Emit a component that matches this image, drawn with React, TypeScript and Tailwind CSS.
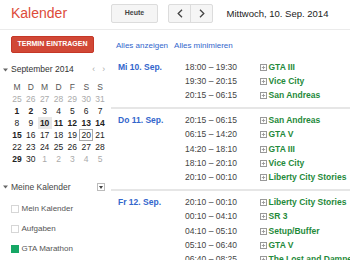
import React from "react";

type Entry = [string, string];

const agenda: { label: string; items: Entry[] }[] = [
  {
    label: "Mi 10. Sep.",
    items: [
      ["18:00 – 19:30", "GTA III"],
      ["19:30 – 20:15", "Vice City"],
      ["20:15 – 06:15", "San Andreas"],
    ],
  },
  {
    label: "Do 11. Sep.",
    items: [
      ["20:15 – 06:15", "San Andreas"],
      ["06:15 – 14:20", "GTA V"],
      ["14:20 – 18:10", "GTA III"],
      ["18:10 – 20:10", "Vice City"],
      ["20:10 – 00:10", "Liberty City Stories"],
    ],
  },
  {
    label: "Fr 12. Sep.",
    items: [
      ["20:10 – 00:10", "Liberty City Stories"],
      ["00:10 – 04:10", "SR 3"],
      ["04:10 – 05:10", "Setup/Buffer"],
      ["05:10 – 06:40", "GTA V"],
      ["06:40 – 08:25", "The Lost and Damned"],
    ],
  },
];

const weeks = [
  [25, 26, 27, 28, 29, 30, 31],
  [1, 2, 3, 4, 5, 6, 7],
  [8, 9, 10, 11, 12, 13, 14],
  [15, 16, 17, 18, 19, 20, 21],
  [22, 23, 24, 25, 26, 27, 28],
  [29, 30, 1, 2, 3, 4, 5],
];

const boldDays = [1, 2, 10, 11, 12, 13, 14, 15, 29];

function Caret() {
  return (
    <svg width="5" height="4" viewBox="0 0 5 4" className="shrink-0">
      <path d="M0 0.5h5L2.5 3.5z" fill="#666" />
    </svg>
  );
}

function Expand() {
  return (
    <svg width="7" height="7" viewBox="0 0 7 7" className="shrink-0">
      <rect x="0.5" y="0.5" width="6" height="6" fill="none" stroke="#999" />
      <path d="M1.8 3.5h3.4M3.5 1.8v3.4" stroke="#999" strokeWidth="0.9" />
    </svg>
  );
}

function Chevron({ dir }: { dir: "l" | "r" }) {
  return (
    <svg width="6" height="9" viewBox="0 0 6 9">
      <path
        d={dir === "l" ? "M5 0.8L1.2 4.5 5 8.2" : "M1 0.8l3.8 3.7L1 8.2"}
        fill="none"
        stroke="#444"
        strokeWidth="1.3"
      />
    </svg>
  );
}

function MiniCalendar() {
  return (
    <div className="mt-[11.5px]">
      <div className="flex h-[10px] items-center pl-[3px] pr-[6px] text-[8.5px] text-[#333]">
        <Caret />
        <span className="ml-[3px]">September 2014</span>
        <span className="ml-auto text-[#aaa]">‹</span>
        <span className="ml-[7px] text-[#aaa]">›</span>
      </div>
      <div className="mt-[6px] ml-[10px] grid w-[97px] grid-cols-7 text-center text-[8.5px] leading-[12px]">
        {["M", "D", "M", "D", "F", "S", "S"].map((d, i) => (
          <span key={i} className="text-[#555]">
            {d}
          </span>
        ))}
        {weeks.map((week, w) =>
          week.map((n, i) => {
            const outside = (w === 0 && n > 20) || (w === 5 && n < 10);
            const bold = !outside && boldDays.includes(n);
            const today = !outside && n === 10;
            const selected = !outside && n === 20;
            return (
              <span
                key={`${w}-${i}`}
                className={`${outside ? "text-[#aaa]" : "text-[#222]"} ${
                  bold ? "font-bold" : ""
                } ${today ? "bg-[#e8e8e8]" : ""} ${
                  selected ? "outline outline-1 -outline-offset-1 outline-[#aaa]" : ""
                }`}
              >
                {n}
              </span>
            );
          })
        )}
      </div>
    </div>
  );
}

function MyCalendars() {
  const items = [
    { name: "Mein Kalender", color: "" },
    { name: "Aufgaben", color: "" },
    { name: "GTA Marathon", color: "bg-[#16a765] border-[#16a765]" },
  ];
  return (
    <div className="mt-[17.5px]">
      <div className="flex h-[10px] items-center pl-[3px] text-[8.5px] text-[#444]">
        <Caret />
        <span className="ml-[3px]">Meine Kalender</span>
        <span className="ml-auto mr-[6px] flex h-[8px] w-[8px] items-center justify-center border border-[#bbb] bg-white">
          <svg width="4" height="3" viewBox="0 0 4 3">
            <path d="M0 0h4L2 3z" fill="#444" />
          </svg>
        </span>
      </div>
      <div className="mt-[7px]">
        {items.map((c) => (
          <div key={c.name} className="flex h-[20px] items-center pl-[11px] text-[8px]">
            <span className={`h-[7.5px] w-[7.5px] border ${c.color || "border-[#d6d6d6] bg-white"}`} />
            <span className="ml-[3px] text-[#555]">{c.name}</span>
          </div>
        ))}
      </div>
    </div>
  );
}

export default function App() {
  return (
    <div className="h-[260px] w-[350px] overflow-hidden bg-white font-['Liberation_Sans',Arial,sans-serif]">
      <div className="flex h-[30px] items-start border-b border-[#ebebeb] pt-[4px]">
        <div className="w-[111px] pl-[11px] text-[14px] leading-[19px] text-[#dd4b39]">Kalender</div>
        <button className="h-[19px] w-[47px] rounded-[2px] border border-[#dcdcdc] bg-[#f5f5f5] text-[7px] font-bold text-[#444]">
          Heute
        </button>
        <div className="ml-[10px] flex h-[19px] w-[45px] rounded-[2px] border border-[#dcdcdc] bg-[#f5f5f5]">
          <span className="flex flex-1 items-center justify-center border-r border-[#dcdcdc]">
            <Chevron dir="l" />
          </span>
          <span className="flex flex-1 items-center justify-center">
            <Chevron dir="r" />
          </span>
        </div>
        <div className="ml-[13.5px] text-[9.5px] leading-[19px] text-[#222]">Mittwoch, 10. Sep. 2014</div>
      </div>

      <div className="flex">
        <div className="w-[111px] shrink-0">
          <div className="flex pt-[6px] pl-[11px]">
            <button className="h-[17px] w-[83px] rounded-[2px] border border-[#c53727] bg-[#d14836] text-[7px] font-bold text-white">
              TERMIN EINTRAGEN
            </button>
          </div>
          <MiniCalendar />
          <MyCalendars />
        </div>

        <div className="flex-1">
          <div className="mt-[10px] flex h-[12px] items-center pl-[5px] text-[8px] text-[#3366cc]">
            <span>Alles anzeigen</span>
            <span className="ml-[6px]">Alles minimieren</span>
          </div>
          <div className="mt-[8px]">
            {agenda.map((day, d) => (
              <div
                key={day.label}
                className={`flex border-b-2 border-[#e6e6e6] pb-[4.5px] ${d === 0 ? "" : "pt-[4px]"}`}
              >
                <div className="w-[74px] shrink-0 pl-[7px] text-[8.5px] font-bold leading-[14.3px] text-[#3366cc]">
                  {day.label}
                </div>
                <div>
                  {day.items.map(([time, name], i) => (
                    <div key={i} className="flex h-[14.3px] items-center whitespace-nowrap text-[8.5px]">
                      <span className="w-[75px] shrink-0 text-[#444]">{time}</span>
                      <Expand />
                      <span className="ml-[1.5px] font-bold text-[#1f8a3b]">{name}</span>
                    </div>
                  ))}
                </div>
              </div>
            ))}
          </div>
        </div>
      </div>
    </div>
  );
}
